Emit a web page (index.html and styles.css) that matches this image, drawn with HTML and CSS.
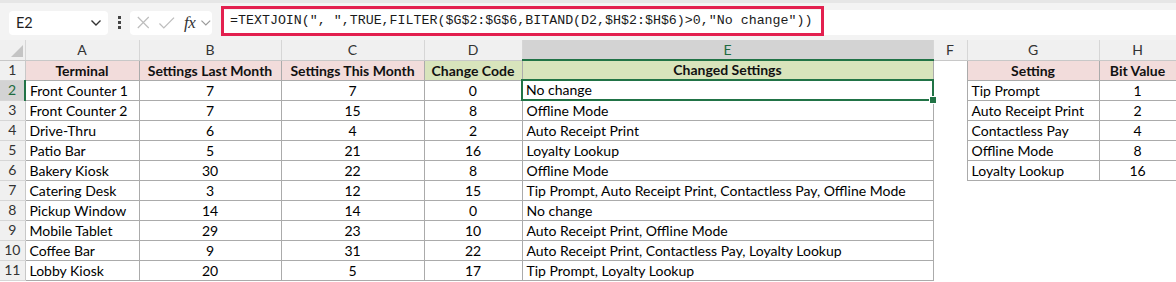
FILE: index.html
```html
<!DOCTYPE html>
<html>
<head>
<meta charset="utf-8">
<link rel="stylesheet" href="styles.css">
</head>
<body>
<div class="fbar">
  <div class="namebox"><span>E2</span>
    <svg class="chev" width="12" height="8" viewBox="0 0 12 8"><path d="M1.5 1.5 L6 6 L10.5 1.5" fill="none" stroke="#333" stroke-width="1.4"/></svg>
  </div>
  <div class="dots"><i></i><i></i><i></i></div>
  <div class="fnbox">
    <svg width="15" height="15" viewBox="0 0 16 16"><path d="M2 2 L14 14 M14 2 L2 14" stroke="#bdbdbd" stroke-width="1.3"/></svg>
    <svg width="18" height="16" viewBox="0 0 18 16"><path d="M1.5 8.5 L6 13 L16.5 2.5" fill="none" stroke="#bdbdbd" stroke-width="1.3"/></svg>
    <span class="fx">fx</span>
    <svg width="12" height="8" viewBox="0 0 12 8"><path d="M1.5 1.5 L6 6 L10.5 1.5" fill="none" stroke="#9a9a9a" stroke-width="1.2"/></svg>
  </div>
  <div class="formula">
    <div class="hl">=TEXTJOIN(", ",TRUE,FILTER($G$2:$G$6,BITAND(D2,$H$2:$H$6)&gt;0,"No change"))</div>
  </div>
</div>
<table class="sheet">
  <colgroup>
    <col class="w-rh"><col class="w-a"><col class="w-b"><col class="w-c"><col class="w-d"><col class="w-e"><col class="w-f"><col class="w-g"><col class="w-h">
  </colgroup>
  <thead>
    <tr class="colhdr">
      <th class="corner"><svg width="12" height="12" viewBox="0 0 12 12"><path d="M12 0 L12 12 L0 12 Z" fill="#c4c4c4"/></svg></th>
      <th>A</th><th>B</th><th>C</th><th>D</th><th class="sel">E</th><th>F</th><th>G</th><th>H</th>
    </tr>
  </thead>
  <tbody>
    <tr><th class="rh">1</th><td class="hd pink">Terminal</td><td class="hd pink">Settings Last Month</td><td class="hd pink">Settings This Month</td><td class="hd green">Change Code</td><td class="hd green">Changed Settings</td><td class="nb"></td><td class="hd pink">Setting</td><td class="hd pink">Bit Value</td></tr>
    <tr><th class="rh rsel">2</th><td class="t">Front Counter 1</td><td class="n">7</td><td class="n">7</td><td class="n">0</td><td class="t active">No change<span class="handle"></span></td><td class="nb"></td><td class="t">Tip Prompt</td><td class="n">1</td></tr>
    <tr><th class="rh">3</th><td class="t">Front Counter 2</td><td class="n">7</td><td class="n">15</td><td class="n">8</td><td class="t">Offline Mode</td><td class="nb"></td><td class="t">Auto Receipt Print</td><td class="n">2</td></tr>
    <tr><th class="rh">4</th><td class="t">Drive-Thru</td><td class="n">6</td><td class="n">4</td><td class="n">2</td><td class="t">Auto Receipt Print</td><td class="nb"></td><td class="t">Contactless Pay</td><td class="n">4</td></tr>
    <tr><th class="rh">5</th><td class="t">Patio Bar</td><td class="n">5</td><td class="n">21</td><td class="n">16</td><td class="t">Loyalty Lookup</td><td class="nb"></td><td class="t">Offline Mode</td><td class="n">8</td></tr>
    <tr><th class="rh">6</th><td class="t">Bakery Kiosk</td><td class="n">30</td><td class="n">22</td><td class="n">8</td><td class="t">Offline Mode</td><td class="nb"></td><td class="t">Loyalty Lookup</td><td class="n">16</td></tr>
    <tr><th class="rh">7</th><td class="t">Catering Desk</td><td class="n">3</td><td class="n">12</td><td class="n">15</td><td class="t">Tip Prompt, Auto Receipt Print, Contactless Pay, Offline Mode</td><td class="nb"></td><td class="nb"></td><td class="nb"></td></tr>
    <tr><th class="rh">8</th><td class="t">Pickup Window</td><td class="n">14</td><td class="n">14</td><td class="n">0</td><td class="t">No change</td><td class="nb"></td><td class="nb"></td><td class="nb"></td></tr>
    <tr><th class="rh">9</th><td class="t">Mobile Tablet</td><td class="n">29</td><td class="n">23</td><td class="n">10</td><td class="t">Auto Receipt Print, Offline Mode</td><td class="nb"></td><td class="nb"></td><td class="nb"></td></tr>
    <tr><th class="rh">10</th><td class="t">Coffee Bar</td><td class="n">9</td><td class="n">31</td><td class="n">22</td><td class="t">Auto Receipt Print, Contactless Pay, Loyalty Lookup</td><td class="nb"></td><td class="nb"></td><td class="nb"></td></tr>
    <tr><th class="rh">11</th><td class="t">Lobby Kiosk</td><td class="n">20</td><td class="n">5</td><td class="n">17</td><td class="t">Tip Prompt, Loyalty Lookup</td><td class="nb"></td><td class="nb"></td><td class="nb"></td></tr>
  </tbody>
</table>
</body>
</html>
```

FILE: styles.css
```css
html, body {
  margin: 0;
  padding: 0;
  background: #ffffff;
  width: 1176px;
  height: 282px;
  overflow: hidden;
  font-family: Lato, "Open Sans", "Liberation Sans", sans-serif;
  color: #000;
}

.fbar {
  height: 40px;
  background: #f3f3f3;
  display: flex;
  align-items: center;
  box-sizing: border-box;
  padding-left: 9px;
  border-top: 3px solid #e6e6e6;
}

.namebox {
  width: 99px;
  height: 24px;
  background: #fff;
  border-radius: 4px;
  box-sizing: border-box;
  display: flex;
  align-items: center;
  justify-content: space-between;
  padding: 0 6px 0 7px;
  font-size: 14.5px;
  color: #1f1f1f;
  margin-top: 2px;
}

.dots {
  width: 22px;
  display: flex;
  flex-direction: column;
  align-items: center;
  gap: 2px;
  margin-top: 2px;
}
.dots i {
  display: block;
  width: 3px;
  height: 3px;
  background: #444;
}

.fnbox {
  width: 82px;
  height: 24px;
  background: #fff;
  border-radius: 4px;
  box-sizing: border-box;
  display: flex;
  align-items: center;
  gap: 7px;
  padding-left: 6px;
  margin-top: 2px;
}
.fx {
  font-family: "Liberation Serif", serif;
  font-style: italic;
  font-size: 17px;
  color: #333;
  margin-left: 2px;
  margin-right: -2px;
  letter-spacing: -0.5px;
}

.formula {
  flex: 1;
  height: 25px;
  background: #fff;
  margin-left: 9px;
  margin-top: 2px;
  position: relative;
}
.hl {
  position: absolute;
  left: 0;
  top: -4px;
  width: 603px;
  height: 30px;
  box-sizing: border-box;
  border: 3px solid #e3204f;
  font-family: "Liberation Mono", "DejaVu Sans Mono", monospace;
  font-size: 13.3px;
  line-height: 24px;
  padding-left: 6px;
  color: #1a1a1a;
  white-space: nowrap;
}

.sheet {
  border-collapse: collapse;
  table-layout: fixed;
  width: 1176px;
  font-size: 14px;
}
.w-rh { width: 25px; }
.w-a { width: 114px; }
.w-b { width: 142px; }
.w-c { width: 143px; }
.w-d { width: 98px; }
.w-e { width: 411px; }
.w-f { width: 34px; }
.w-g { width: 132px; }
.w-h { width: 77px; }

.sheet tr { height: 20px; }
.sheet td, .sheet th {
  padding: 0;
  height: 20px;
  box-sizing: border-box;
  white-space: nowrap;
  overflow: hidden;
  line-height: 18px;
}
.sheet td {
  vertical-align: bottom;
}

.colhdr th {
  background: #f0f0f0;
  font-weight: normal;
  color: #333;
  font-size: 14px;
  border-right: 1px solid #d6d6d6;
  border-bottom: 1px solid #c8c8c8;
  text-align: center;
  vertical-align: middle;
}
.colhdr th.sel {
  background: #d3d3d3;
  color: #1e6b40;
  border-bottom: 2px solid #217346;
}
.colhdr th.corner {
  text-align: right;
  vertical-align: bottom;
  padding: 0 2px 3px 0;
  line-height: 0;
}

.rh {
  background: #f0f0f0;
  font-weight: normal;
  color: #333;
  text-align: center;
  border-right: 1px solid #c8c8c8;
  border-bottom: 1px solid #d6d6d6;
  font-size: 14px;
}
.rh.rsel {
  background: #d3d3d3;
  color: #1e6b40;
  border-right: 2px solid #217346;
}

td {
  border: 1px solid #ababab;
}
td.nb {
  border-top: none;
  border-bottom: none;
  border-left: none;
  border-right: none;
}
td.hd {
  font-weight: bold;
  text-align: center;
  color: #111;
}
.pink { background: #f2dcdb; }
.green { background: #d8e4bc; }
td.t { text-align: left; padding-left: 4px; }
td.n { text-align: center; }

.sheet td.active {
  position: relative;
  overflow: visible;
  border: 2px solid #217346;
  padding-left: 3px;
}
.handle {
  position: absolute;
  right: -5px;
  bottom: -5px;
  width: 6px;
  height: 6px;
  background: #217346;
  border: 1px solid #fff;
  z-index: 2;
}
```
